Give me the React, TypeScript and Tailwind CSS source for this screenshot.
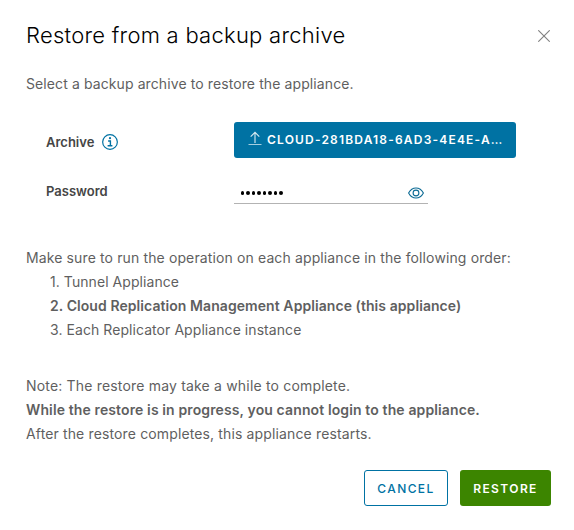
import type { ReactNode } from "react";

function Row({ label, children }: { label: ReactNode; children: ReactNode }) {
  return (
    <div className="flex h-9 pl-5">
      <div className="flex w-[188px] shrink-0 items-center gap-2 text-[13px] font-semibold text-[#454545]">{label}</div>
      {children}
    </div>
  );
}

function InfoIcon() {
  return (
    <svg width="16" height="16" viewBox="0 0 16 16" fill="none" stroke="#0072a3" className="-mt-px">
      <circle cx="8" cy="8" r="7.35" strokeWidth="1.2" />
      <circle cx="8" cy="4.2" r="1.1" fill="#0072a3" stroke="none" />
      <path d="M6.1 7H8.4V11.7M5.6 11.8H10.4" strokeWidth="1.4" />
    </svg>
  );
}

function UploadIcon() {
  return (
    <svg width="14" height="15" viewBox="0 0 14 15" fill="none" stroke="#fff" className="-mt-1 shrink-0">
      <path d="M7 12V1.6M2.7 5.7L7 1.4L11.3 5.7" strokeWidth="1.1" strokeOpacity=".85" />
      <path d="M.5 13.5H13.5" strokeOpacity=".65" />
    </svg>
  );
}

function EyeIcon() {
  return (
    <svg width="16" height="12" viewBox="0 0 16 12" fill="none" stroke="#0b6a94" strokeWidth="1.1" className="mt-0.5">
      <path d="M.6 6C2.3 2.8 5 1 8 1s5.7 1.8 7.4 5C13.7 9.2 11 11 8 11S2.3 9.2.6 6Z" />
      <circle cx="8" cy="6" r="2.9" />
    </svg>
  );
}

export default function App() {
  return (
    <main className="flex h-[530px] w-[574px] flex-col bg-white px-[26px] font-['Inter','Liberation_Sans',sans-serif] text-sm leading-6 text-[#5f5f5f]">
      <header className="flex h-[72px] items-center justify-between">
        <h1 className="-mt-0.5 text-[22px] font-light tracking-[0.26px] text-black">Restore from a backup archive</h1>
        <button aria-label="Close" className="-mr-[2px]">
          <svg width="12" height="12" viewBox="0 0 12 12" stroke="#808080" strokeWidth="1.1">
            <path d="M.3.3L11.7 11.7M11.7.3L.3 11.7" />
          </svg>
        </button>
      </header>
      <p className="tracking-[0.1px]">Select a backup archive to restore the appliance.</p>
      <section className="mt-[26px] flex flex-col">
        <Row label={<><span className="pt-1">Archive</span><span className="pt-1"><InfoIcon /></span></>}>
          <button className="flex w-[282px] items-center gap-[5px] rounded-[3px] bg-[#0072a3] pl-3.5 text-xs font-semibold tracking-[1.19px] text-white">
            <UploadIcon />
            <span className="whitespace-nowrap">CLOUD-281BDA18-6AD3-4E4E-A…</span>
          </button>
        </Row>
        <div className="h-[15px]" />
        <Row label={<span>Password</span>}>
          <div className="flex h-[31px] w-[194px] items-center justify-between border-b border-[#b3b3b3] pt-2 pr-1 pl-[7px]">
            <div className="mt-0.5 flex gap-[2.1px]">
              {Array.from({ length: 8 }, (_, i) => (
                <i key={i} className="size-[3.4px] rounded-full bg-black" />
              ))}
            </div>
            <EyeIcon />
          </div>
        </Row>
      </section>
      <section className="mt-[37px]">
        <p className="tracking-[0.125px]">Make sure to run the operation on each appliance in the following order:</p>
        <div className="pl-6">
          <p className="tracking-[0.06px]">1. Tunnel Appliance</p>
          <p className="font-semibold tracking-[0.07px]">2. Cloud Replication Management Appliance (this appliance)</p>
          <p className="tracking-[0.065px]">3. Each Replicator Appliance instance</p>
        </div>
      </section>
      <section className="mt-8">
        <p className="tracking-[0.18px]">Note: The restore may take a while to complete.</p>
        <p className="font-semibold tracking-[0.12px]">While the restore is in progress, you cannot login to the appliance.</p>
        <p className="tracking-[0.135px]">After the restore completes, this appliance restarts.</p>
      </section>
      <footer className="mt-6 -mr-[3px] flex justify-end gap-3 text-xs">
        <button className="h-9 w-[84px] rounded-[3px] border border-[#0072a3] pt-px font-medium tracking-[1.4px] text-[#0072a3]">CANCEL</button>
        <button className="h-9 w-[91px] rounded-[3px] bg-[#3c8500] pt-0.5 font-semibold tracking-[1.4px] text-white">RESTORE</button>
      </footer>
    </main>
  );
}
